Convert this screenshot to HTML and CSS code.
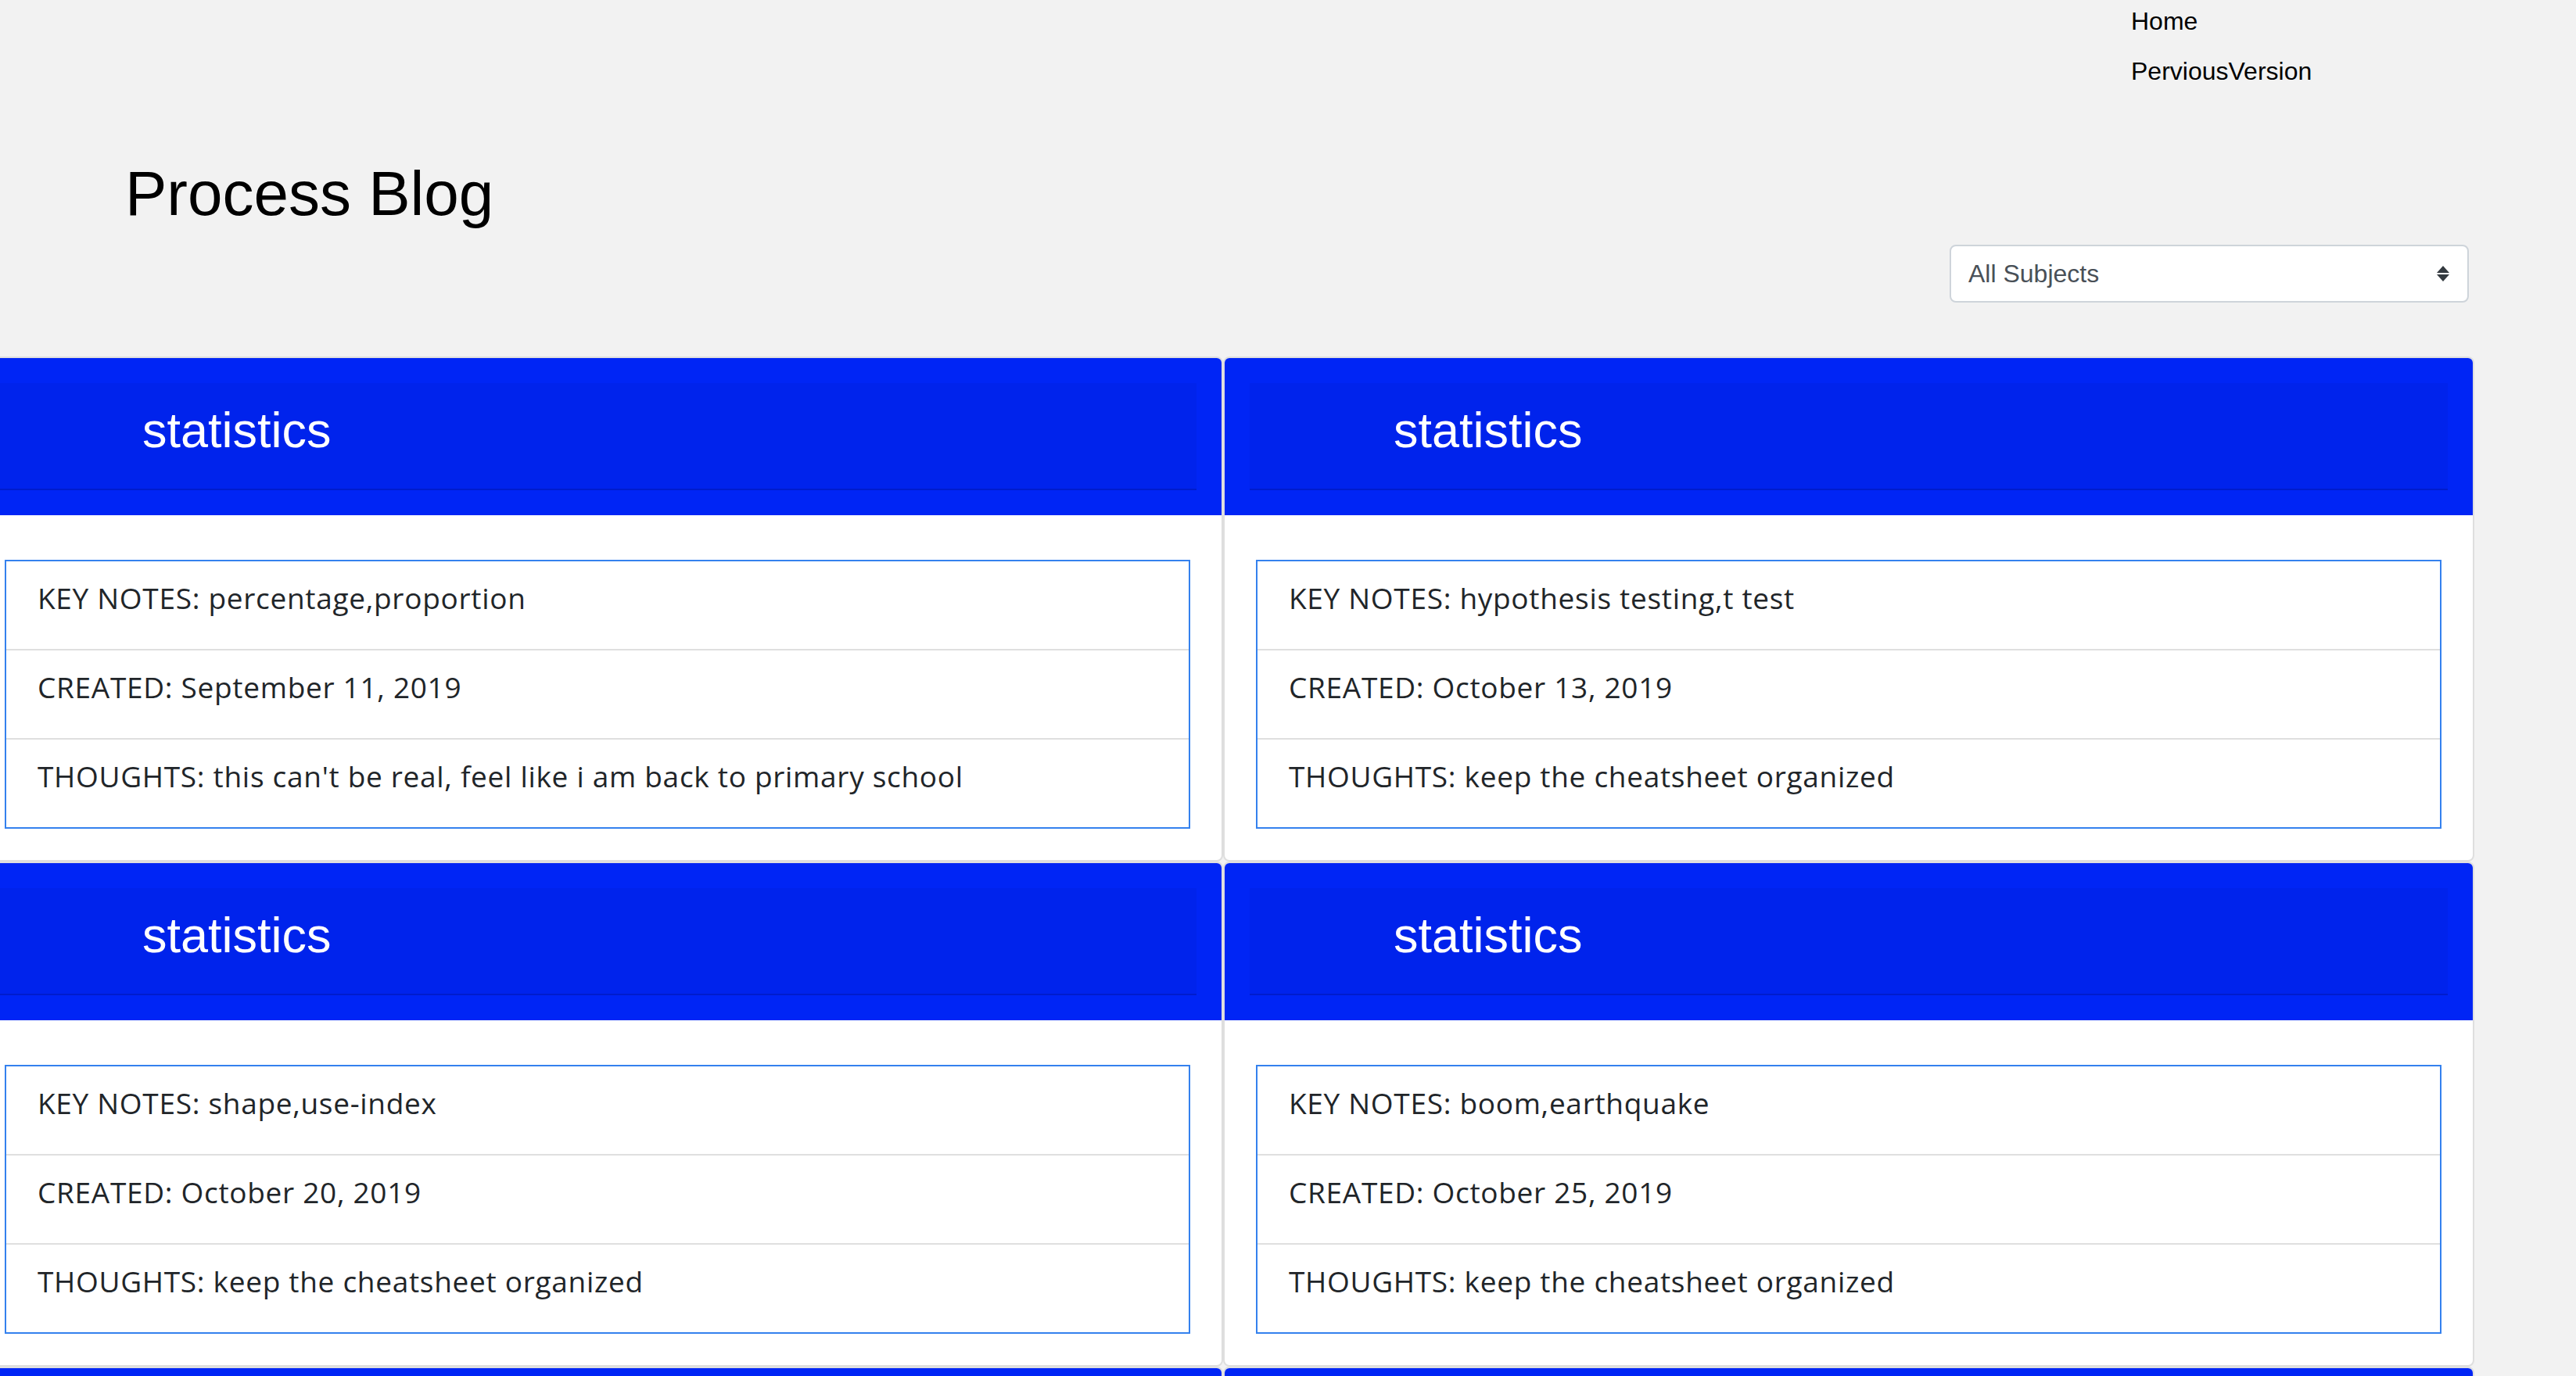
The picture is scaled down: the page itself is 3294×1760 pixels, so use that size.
FILE: index.html
```html
<!DOCTYPE html>
<html lang="en">
<head>
<meta charset="utf-8">
<title>Process Blog</title>
<link rel="stylesheet" href="styles.css">
</head>
<body>
<nav class="topnav">
  <ul class="nav-list">
    <li class="nav-item">Home</li>
    <li class="nav-item">PerviousVersion</li>
  </ul>
</nav>
<header class="page-head">
  <h1 class="page-title">Process Blog</h1>
</header>
<div class="filter-row">
  <div class="subject-select">
    <span class="select-text">All Subjects</span>
    <svg class="select-arrows" width="16" height="20" viewBox="0 0 16 20"><path d="M8 0 L16 9 L0 9 Z M0 11 L16 11 L8 20 Z" fill="#343a40"/></svg>
  </div>
</div>
<main class="cards">
  <article class="card">
    <div class="card-top"><div class="card-header">statistics</div></div>
    <div class="card-body">
      <ul class="notes">
        <li class="note">KEY NOTES: percentage,proportion</li>
        <li class="note">CREATED: September 11, 2019</li>
        <li class="note">THOUGHTS: this can't be real, feel like i am back to primary school</li>
      </ul>
    </div>
  </article>
  <article class="card">
    <div class="card-top"><div class="card-header">statistics</div></div>
    <div class="card-body">
      <ul class="notes">
        <li class="note">KEY NOTES: hypothesis testing,t test</li>
        <li class="note">CREATED: October 13, 2019</li>
        <li class="note">THOUGHTS: keep the cheatsheet organized</li>
      </ul>
    </div>
  </article>
  <article class="card">
    <div class="card-top"><div class="card-header">statistics</div></div>
    <div class="card-body">
      <ul class="notes">
        <li class="note">KEY NOTES: shape,use-index</li>
        <li class="note">CREATED: October 20, 2019</li>
        <li class="note">THOUGHTS: keep the cheatsheet organized</li>
      </ul>
    </div>
  </article>
  <article class="card">
    <div class="card-top"><div class="card-header">statistics</div></div>
    <div class="card-body">
      <ul class="notes">
        <li class="note">KEY NOTES: boom,earthquake</li>
        <li class="note">CREATED: October 25, 2019</li>
        <li class="note">THOUGHTS: keep the cheatsheet organized</li>
      </ul>
    </div>
  </article>
  <article class="card">
    <div class="card-top"><div class="card-header">statistics</div></div>
    <div class="card-body">
      <ul class="notes">
        <li class="note">KEY NOTES: regression,correlation</li>
        <li class="note">CREATED: November 2, 2019</li>
        <li class="note">THOUGHTS: keep the cheatsheet organized</li>
      </ul>
    </div>
  </article>
  <article class="card">
    <div class="card-top"><div class="card-header">statistics</div></div>
    <div class="card-body">
      <ul class="notes">
        <li class="note">KEY NOTES: anova,chi-square</li>
        <li class="note">CREATED: November 9, 2019</li>
        <li class="note">THOUGHTS: keep the cheatsheet organized</li>
      </ul>
    </div>
  </article>
</main>
</body>
</html>
```
FILE: styles.css
```css
html, body {
  margin: 0;
  padding: 0;
}
body {
  background: #f2f2f2;
  font-family: "Liberation Sans", Arial, sans-serif;
  color: #212529;
}
.topnav {
  display: flex;
  justify-content: flex-end;
}
.nav-list {
  list-style: none;
  margin: 0;
  padding: 4px 0 0 0;
  width: 569px;
  display: flex;
  flex-direction: column;
  gap: 17px;
}
.nav-item {
  font-size: 32px;
  line-height: 47px;
  color: #000;
}
.page-head {
  padding-left: 160px;
  margin-top: 85px;
}
.page-title {
  margin: 0;
  font-size: 80px;
  line-height: 96px;
  font-weight: 400;
  color: #000;
}
.filter-row {
  display: flex;
  justify-content: flex-end;
  padding-right: 137px;
  margin-top: 17px;
}
.subject-select {
  box-sizing: border-box;
  width: 664px;
  height: 74px;
  background: #fff;
  border: 2px solid #ced4da;
  border-radius: 8px;
  display: flex;
  align-items: center;
  justify-content: space-between;
  padding: 0 23px 0 22px;
  font-size: 32px;
  color: #495057;
}
.select-arrows {
  display: block;
}
.cards {
  margin-top: 69px;
  margin-left: -36px;
  display: grid;
  grid-template-columns: 1600px 1600px;
}
.card {
  box-sizing: border-box;
  border: 2px solid #dedede;
  border-radius: 8px;
  overflow: hidden;
  background: #fff;
}
.card-top {
  background: #0025f5;
  padding: 32px;
}
.card-header {
  background: #0023ec;
  border-bottom: 2px solid #001ccc;
  color: #fff;
  font-size: 63px;
  line-height: 70px;
  padding: 25px 40px 40px 184px;
}
.card-body {
  padding: 57px 40px 40px 40px;
}
.notes {
  list-style: none;
  margin: 0;
  padding: 0;
  border: 2px solid #3481ee;
}
.note {
  font-family: "Open Sans", "Liberation Sans", sans-serif;
  font-size: 37px;
  letter-spacing: 0.7px;
  line-height: 42px;
  padding: 26px 40px 44px 40px;
}
.note + .note {
  border-top: 2px solid #dfdfdf;
}
```
